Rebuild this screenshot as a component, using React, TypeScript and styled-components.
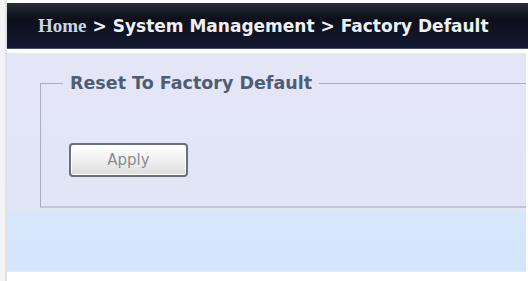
import styled, { createGlobalStyle } from "styled-components";

const GlobalStyle = createGlobalStyle`
  html, body {
    margin: 0;
    padding: 0;
    background: #ffffff;
  }
`;

const Page = styled.div`
  width: 528px;
  height: 281px;
  box-sizing: border-box;
  padding: 3px 0 9px 7px;
  display: flex;
  flex-direction: column;
  gap: 4px;
  overflow: hidden;
  background: linear-gradient(to right, #f4f4f6 0, #f4f4f6 5px, #e0e1e6 5px, #e0e1e6 7px, #ffffff 7px);
`;

const Breadcrumb = styled.div`
  height: 45px;
  flex-shrink: 0;
  display: flex;
  align-items: center;
  padding-left: 31px;
  gap: 6px;
  background: linear-gradient(to bottom, #2a2c36 0%, #0d0f1a 35%, #141a33 100%);
  border-bottom: 1px solid #4a5066;
`;

const HomeLink = styled.span`
  font-family: "Liberation Serif", "DejaVu Serif", serif;
  font-weight: bold;
  font-size: 19px;
  color: #c9d6ea;
`;

const Trail = styled.span`
  font-family: "DejaVu Sans", Verdana, sans-serif;
  font-weight: bold;
  font-size: 17px;
  color: #eef0f4;
`;

const Body = styled.div`
  flex: 1;
  display: flex;
  flex-direction: column;
  margin-right: 2px;
  background: linear-gradient(to bottom, #e4e6f6 0, #e1e5f6 159px, #d6e6fb 160px, #d5e5fa 100%);
  border-bottom: 1px solid #e2e8f2;
  padding-top: 20px;
`;

const Fieldset = styled.fieldset`
  margin: 0 0 0 33px;
  padding: 0;
  height: 135px;
  box-sizing: border-box;
  border: 1px solid #a9adbd;
  border-right: none;
  border-bottom-width: 2px;
  border-bottom-color: #c2c6d6;
  display: flex;
  flex-direction: column;
`;

const Legend = styled.legend`
  margin-left: 22px;
  padding: 0 7px;
  font-family: "DejaVu Sans", Verdana, sans-serif;
  font-weight: bold;
  font-size: 17.5px;
  color: #4f5d72;
`;

const ButtonRow = styled.div`
  padding: 50px 0 0 28px;
`;

const Button = styled.button`
  width: 119px;
  height: 34px;
  border: 2px solid #6c6f78;
  border-radius: 4px;
  background: linear-gradient(to bottom, #ffffff 0%, #f2f2f2 45%, #dcdcdc 100%);
  box-shadow: inset 0 0 0 1px #ffffff;
  font-family: "DejaVu Sans", Verdana, sans-serif;
  font-size: 15px;
  color: #8a8c90;
  padding: 0;
`;

export default function App() {
  return (
    <>
      <GlobalStyle />
      <Page>
        <Breadcrumb>
          <HomeLink>Home</HomeLink>
          <Trail>&gt; System Management &gt; Factory Default</Trail>
        </Breadcrumb>
        <Body>
          <Fieldset>
            <Legend>Reset To Factory Default</Legend>
            <ButtonRow>
              <Button>Apply</Button>
            </ButtonRow>
          </Fieldset>
        </Body>
      </Page>
    </>
  );
}
